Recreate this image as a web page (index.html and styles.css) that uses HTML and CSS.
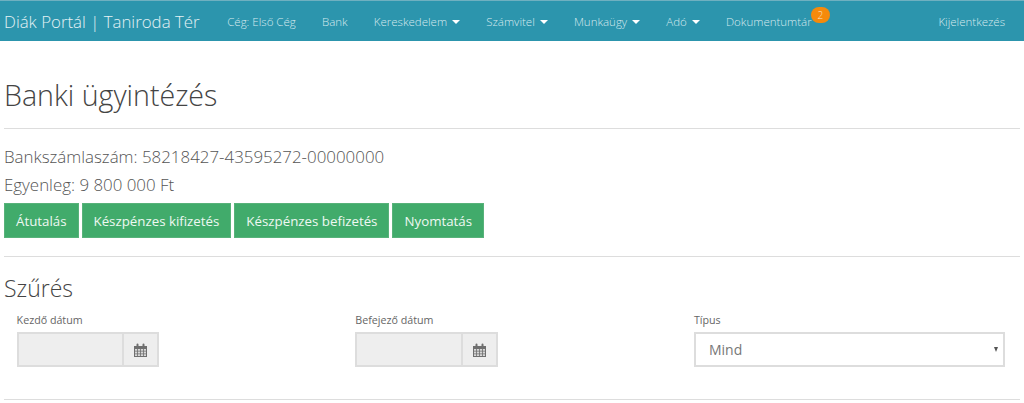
FILE: index.html
```html
<!DOCTYPE html>
<html lang="hu">
<head>
<meta charset="utf-8">
<title>Banki ügyintézés</title>
<link rel="stylesheet" href="styles.css">
</head>
<body>
<nav class="navbar">
  <a class="brand">Diák Portál | Taniroda Tér</a>
  <ul class="nav">
    <li><a>Cég: Első Cég</a></li>
    <li><a>Bank</a></li>
    <li><a>Kereskedelem <span class="caret"></span></a></li>
    <li><a>Számvitel <span class="caret"></span></a></li>
    <li><a>Munkaügy <span class="caret"></span></a></li>
    <li><a>Adó <span class="caret"></span></a></li>
    <li class="doc"><a>Dokumentumtár</a><span class="badge">2</span></li>
  </ul>
  <a class="logout">Kijelentkezés</a>
</nav>
<main class="container">
  <h1 class="title">Banki ügyintézés</h1>
  <hr class="rule rule-title">
  <p class="info">Bankszámlaszám: 58218427-43595272-00000000</p>
  <p class="info">Egyenleg: 9 800 000 Ft</p>
  <div class="actions">
    <button class="btn">Átutalás</button>
    <button class="btn">Készpénzes kifizetés</button>
    <button class="btn">Készpénzes befizetés</button>
    <button class="btn">Nyomtatás</button>
  </div>
  <hr class="rule rule-actions">
  <h2 class="subtitle">Szűrés</h2>
  <div class="filters">
    <div class="field">
      <label>Kezdő dátum</label>
      <div class="date">
        <span class="date-input"></span>
        <span class="date-addon">
          <svg width="13" height="14" viewBox="0 0 13 14"><path fill="#6f6f6f" d="M0 3h2.5V1.5a1 1 0 0 1 2 0V3h4V1.5a1 1 0 0 1 2 0V3H13v11H0z"/><path fill="#d8d8d8" d="M1 6h2.2v1.8H1zM4 6h2.2v1.8H4zM7 6h2.2v1.8H7zM10 6h2v1.8h-2zM1 8.6h2.2v1.8H1zM4 8.6h2.2v1.8H4zM7 8.6h2.2v1.8H7zM10 8.6h2v1.8h-2zM1 11.2h2.2V13H1zM4 11.2h2.2V13H4zM7 11.2h2.2V13H7zM10 11.2h2V13h-2z"/></svg>
        </span>
      </div>
    </div>
    <div class="field">
      <label>Befejező dátum</label>
      <div class="date">
        <span class="date-input"></span>
        <span class="date-addon">
          <svg width="13" height="14" viewBox="0 0 13 14"><path fill="#6f6f6f" d="M0 3h2.5V1.5a1 1 0 0 1 2 0V3h4V1.5a1 1 0 0 1 2 0V3H13v11H0z"/><path fill="#d8d8d8" d="M1 6h2.2v1.8H1zM4 6h2.2v1.8H4zM7 6h2.2v1.8H7zM10 6h2v1.8h-2zM1 8.6h2.2v1.8H1zM4 8.6h2.2v1.8H4zM7 8.6h2.2v1.8H7zM10 8.6h2v1.8h-2zM1 11.2h2.2V13H1zM4 11.2h2.2V13H4zM7 11.2h2.2V13H7zM10 11.2h2V13h-2z"/></svg>
        </span>
      </div>
    </div>
    <div class="field field-wide">
      <label>Típus</label>
      <div class="select"><span>Mind</span><i class="select-arrow"></i></div>
    </div>
  </div>
  <hr class="rule rule-filters">
</main>
</body>
</html>
```
FILE: styles.css
```css
* { box-sizing: border-box; }
html, body { margin: 0; padding: 0; }
body {
  font-family: "Open Sans", sans-serif;
  color: #555;
  background: #fff;
  overflow: hidden;
  height: 403px;
}
.navbar {
  display: flex;
  align-items: center;
  height: 41px;
  background: #2c95ad;
  border-top: 1px solid #6fb0c0;
  color: #d5e9ee;
  padding: 0 19px 0 4px;
}
.brand { font-size: 16.85px; font-weight: 300; color: #e3f1f4; margin-right: 14.5px; white-space: nowrap; }
.nav { display: flex; list-style: none; margin: 0; padding: 0; flex: 1; font-size: 11.5px; font-weight: 300; }
.nav li { padding: 0 13.1px; position: relative; white-space: nowrap; }
.caret {
  display: inline-block;
  width: 0; height: 0;
  margin-left: 2px;
  vertical-align: middle;
  border-top: 4px solid #fff;
  border-left: 4px solid transparent;
  border-right: 4px solid transparent;
}
.doc { display: flex; }
.badge {
  position: absolute;
  left: 98px;
  top: -7px;
  width: 19px;
  height: 16px;
  border-radius: 8px;
  background: #f58a0b;
  color: #fbe3c4;
  font-size: 10px;
  line-height: 16px;
  text-align: center;
}
.logout { font-size: 11.5px; font-weight: 300; white-space: nowrap; }
.container { padding: 0 4px; }
.title { margin: 0; padding-top: 34px; font-size: 28.6px; line-height: 40px; font-weight: 300; color: #444; }
.rule { border: 0; border-top: 1px solid #ddd; margin: 0; }
.rule-title { margin-top: 13px; }
.info { margin: 0; font-size: 16.9px; line-height: 28px; font-weight: 300; color: #555; }
.info:first-of-type { margin-top: 14px; }
.actions { display: flex; gap: 3px; margin-top: 4px; }
.btn {
  height: 35px;
  padding: 0 11px;
  border: 1px solid #58b27a;
  background: #41ab6b;
  color: #eef8f2;
  font: 400 13.3px "Open Sans", sans-serif;
}
.rule-actions { margin-top: 18px; }
.subtitle { margin: 0; padding-top: 15px; font-size: 23px; line-height: 32px; font-weight: 300; color: #444; }
.filters { display: grid; grid-template-columns: repeat(3, 1fr); margin-top: 8px; }
.field { padding: 0 15px 0 12.6px; }
.field label { display: block; font-size: 10.7px; line-height: 16px; color: #666; margin-bottom: 4px; }
.date { display: flex; width: 142.5px; height: 35px; background: #eee; border: 2px solid #ddd; }
.date-input { flex: 1; border-right: 2px solid #ddd; }
.date-addon { width: 33px; display: flex; align-items: center; justify-content: center; }
.select {
  display: flex; align-items: center; justify-content: space-between;
  height: 35px; padding: 0 5px 0 13px;
  border: 2px solid #ddd;
  font-size: 14px; color: #777;
}
.select-arrow {
  width: 0; height: 0;
  border-top: 5px solid #555;
  border-left: 2.5px solid transparent;
  border-right: 2.5px solid transparent;
}
.rule-filters { margin-top: 32px; }
```
